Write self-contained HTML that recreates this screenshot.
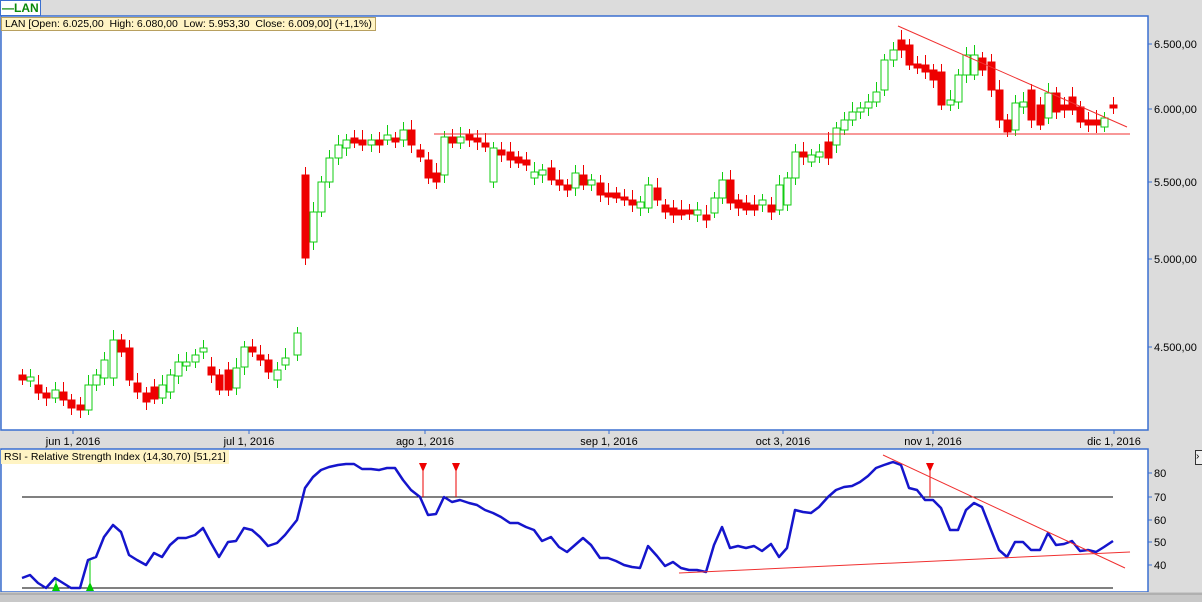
<!DOCTYPE html><html><head><style>
body{margin:0;width:1202px;height:602px;background:#dcdcdc;position:relative;overflow:hidden;font-family:"Liberation Sans",sans-serif}
</style></head><body>
<svg width="1202" height="602" style="position:absolute;left:0;top:0" id="s">
<rect x="1" y="16" width="1147" height="414" fill="#fff" stroke="#3a6fd0" stroke-width="1.5"/>
<rect x="1" y="449" width="1147" height="143" fill="#fff" stroke="#3a6fd0" stroke-width="1.5"/>
<rect x="0" y="592" width="1202" height="10" fill="#c8c8c8"/>
<line x1="0" y1="594" x2="1202" y2="594" fill="#999" stroke="#999"/>
<g id="c"></g>
</svg>
<div style="position:absolute;left:0;top:0;width:41px;height:16px;border:1px solid #3a6fd0;background:#fff;color:#0a8a0a;font-weight:bold;font-size:12px;line-height:14px;box-sizing:border-box;padding-left:1px;white-space:nowrap;overflow:hidden">—LAN</div>
<div style="position:absolute;left:1px;top:17px;height:14px;background:#fff4c4;border:1px solid #b8a060;font-size:10.5px;line-height:13px;padding:0 3px;box-sizing:border-box;white-space:nowrap">LAN [Open: 6.025,00&nbsp; High: 6.080,00&nbsp; Low: 5.953,30&nbsp; Close: 6.009,00] (+1,1%)</div>
<div style="position:absolute;left:1px;top:450px;height:14px;background:#fff4c4;font-size:10.5px;line-height:14px;padding:0 3px;white-space:nowrap">RSI - Relative Strength Index (14,30,70) [51,21]</div>
<div style="position:absolute;left:1195px;top:450px;width:8px;height:13px;border:1px solid #333;background:#eee;font-size:10px;line-height:12px">›</div>
<script>
var g=document.getElementById('c'),h='';
function L(a,b,c,d,col,w){h+='<line x1="'+a+'" y1="'+b+'" x2="'+c+'" y2="'+d+'" stroke="'+col+'" stroke-width="'+(w||1)+'"/>';}
function T(x,y,s,a){h+='<text x="'+x+'" y="'+y+'" font-size="11" font-family="Liberation Sans" text-anchor="'+(a||'start')+'">'+s+'</text>';}
[[44,'6.500,00'],[109,'6.000,00'],[182,'5.500,00'],[259,'5.000,00'],[347,'4.500,00']].forEach(function(p){L(1148,p[0],1152,p[0],'#3a6fd0');T(1154,p[0]+4,p[1]);});
[[73,'jun 1, 2016'],[249,'jul 1, 2016'],[425,'ago 1, 2016'],[609,'sep 1, 2016'],[783,'oct 3, 2016'],[933,'nov 1, 2016'],[1114,'dic 1, 2016']].forEach(function(p){L(p[0],430,p[0],434,'#3a6fd0');T(p[0],445,p[1],'middle');});
[[473,'80'],[497,'70'],[520,'60'],[542,'50'],[565,'40']].forEach(function(p){L(1148,p[0],1152,p[0],'#3a6fd0');T(1154,p[0]+4,p[1]);});
var C=[[22,'r',375,380],[30,'g',377,381],[38,'r',385,393],[46,'r',393,398],[55,'g',390,398],[63,'r',392,400],[71,'r',400,408],[80,'r',405,410],[88,'g',385,410],[96,'g',375,385],[104,'g',360,378],[113,'g',340,378],[121,'r',340,352],[129,'r',348,380],[137,'r',383,392],[146,'r',393,402],[154,'r',387,399],[162,'g',385,398],[170,'g',375,392],[178,'g',362,376],[186,'g',362,366],[195,'g',355,362],[203,'g',348,352],[211,'r',367,375],[219,'r',375,390],[228,'r',370,390],[236,'g',368,388],[244,'g',347,367],[252,'r',347,352],[260,'r',355,360],[268,'r',360,372],[277,'g',370,380],[285,'g',358,365],[297,'g',333,355],[305,'r',175,258],[313,'g',212,242],[321,'g',182,212],[329,'g',158,182],[338,'g',145,158],[346,'g',140,148],[354,'r',138,143],[362,'r',140,145],[371,'g',140,145],[379,'r',140,145],[387,'g',135,140],[395,'r',138,142],[403,'g',130,140],[411,'r',130,145],[420,'r',150,157],[428,'r',160,178],[436,'r',173,182],[444,'g',137,175],[452,'r',137,143],[460,'g',137,143],[469,'r',135,140],[477,'r',138,142],[485,'r',143,147],[493,'g',148,182],[501,'r',150,155],[510,'r',152,160],[518,'r',157,163],[526,'r',160,165],[534,'g',172,178],[542,'g',170,175],[551,'r',168,180],[559,'r',180,185],[567,'r',185,190],[575,'g',173,188],[583,'r',175,185],[591,'g',180,185],[600,'r',183,195],[608,'r',193,197],[616,'r',193,198],[624,'r',197,200],[632,'r',200,205],[640,'g',202,208],[648,'g',185,208],[657,'r',188,200],[665,'r',205,212],[673,'r',208,215],[681,'r',210,215],[689,'r',210,214],[697,'g',210,215],[706,'r',215,220],[714,'g',198,213],[722,'g',180,198],[730,'r',180,203],[738,'r',200,208],[746,'r',203,210],[754,'r',205,210],[762,'g',200,205],[771,'r',205,212],[779,'g',185,210],[787,'g',178,205],[795,'g',152,178],[803,'r',152,157],[811,'g',155,162],[819,'g',152,157],[828,'r',142,158],[836,'g',128,145],[844,'g',120,130],[852,'g',112,120],[860,'g',108,112],[868,'g',102,108],[876,'g',92,102],[884,'g',60,90],[893,'g',50,60],[901,'r',40,50],[909,'r',45,65],[917,'r',64,68],[925,'r',65,72],[933,'r',70,80],[941,'r',72,105],[950,'g',100,105],[958,'g',75,102],[966,'g',55,75],[974,'g',55,75],[982,'r',58,70],[991,'r',62,90],[999,'r',90,120],[1007,'r',120,132],[1015,'g',103,130],[1023,'g',102,107],[1031,'r',90,120],[1040,'r',105,125],[1048,'g',93,118],[1056,'r',93,112],[1064,'r',105,110],[1072,'r',97,110],[1080,'r',107,122],[1088,'r',120,125],[1096,'r',120,125],[1104,'g',118,127],[1113,'r',105,108]];
C.forEach(function(c,i){var col=c[1]=='r'?'#ee0000':'#11cc11';var t=c[2],b=c[3];L(c[0]+.5,t-6-(i%3)*2,c[0]+.5,b+5+(i%4),col);
h+='<rect x="'+(c[0]-3)+'" y="'+t+'" width="7" height="'+Math.max(b-t,2)+'" fill="'+(c[1]=='r'?col:'#fff')+'" stroke="'+col+'"/>';});
L(898,26,1127,127,'#f03030');L(434,134,1130,134,'#f03030');
L(22,497,1113,497,'#000');L(22,588,1113,588,'#000');
L(423,470,423,497,'#e00');L(456,470,456,497,'#e00');L(930,470,930,497,'#e00');
[423,456,930].forEach(function(x){h+='<polygon points="'+(x-4)+',463 '+(x+4)+',463 '+x+',472" fill="#e00"/>';});
L(56,578,56,588,'#0c0');L(90,560,90,588,'#0c0');
[56,90].forEach(function(x){h+='<polygon points="'+(x-4)+',591 '+(x+4)+',591 '+x+',582" fill="#0c0"/>';});
var R=[22,578,30,575,38,583,46,588,55,578,63,583,71,588,80,588,88,560,96,557,104,537,113,525,121,532,129,555,137,560,146,565,154,553,162,557,170,545,178,538,186,538,195,535,203,528,211,543,219,557,228,542,236,541,244,528,252,530,260,537,268,546,277,543,285,535,297,520,305,488,313,477,321,470,329,467,338,465,346,464,354,464,362,469,371,469,379,470,387,468,395,468,403,480,411,490,420,497,428,515,436,514,444,497,452,502,460,500,469,503,477,505,485,510,493,513,501,517,510,523,518,523,526,527,534,530,542,541,551,537,559,547,567,552,575,545,583,538,591,545,600,558,608,558,616,561,624,565,632,567,640,568,648,546,657,556,665,566,673,562,681,568,689,570,697,570,706,572,714,545,722,527,730,548,738,546,746,548,754,546,762,551,771,544,779,557,787,548,795,510,803,512,811,513,819,507,828,497,836,490,844,487,852,486,860,482,868,476,876,468,884,465,893,462,901,465,909,488,917,490,925,500,933,500,941,508,950,530,958,530,966,510,974,503,982,507,991,530,999,550,1007,557,1015,542,1023,542,1031,550,1040,550,1048,533,1056,545,1064,544,1072,541,1080,551,1088,550,1096,552,1104,547,1113,541];
h+='<polyline points="'+R.join(' ')+'" fill="none" stroke="#1515cc" stroke-width="2.5" stroke-linejoin="round"/>';
L(883,455,1125,568,'#f03030');L(679,573,1130,552,'#f03030');
g.innerHTML=h;
</script>
</body></html>
